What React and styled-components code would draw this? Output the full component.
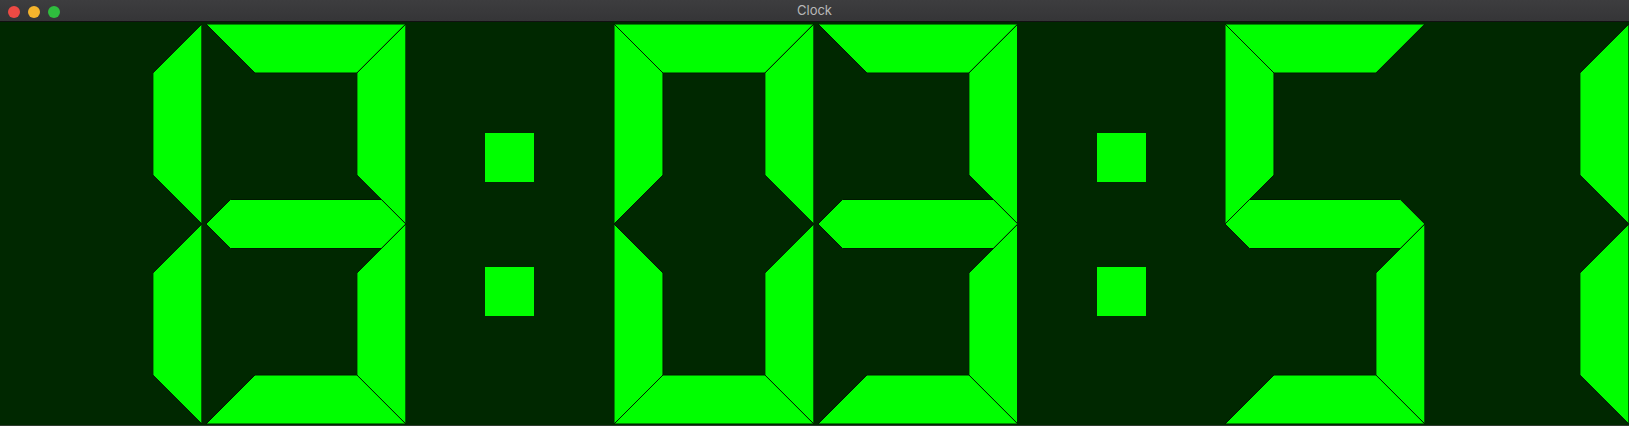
import React from "react";
import styled, { createGlobalStyle } from "styled-components";

const GlobalStyle = createGlobalStyle`
  html, body {
    margin: 0;
    padding: 0;
    background: #002800;
    overflow: hidden;
  }
`;

const Window = styled.div`
  display: flex;
  flex-direction: column;
  width: 1629px;
  height: 426px;
  overflow: hidden;
  background: #002800;
  border-bottom: 1px solid #2f3d2f;
  box-sizing: border-box;
`;

const TitleBar = styled.div`
  position: relative;
  display: flex;
  align-items: center;
  justify-content: center;
  height: 21px;
  flex-shrink: 0;
  background: linear-gradient(#3d3d3f, #353537);
  border-bottom: 1px solid #111;
`;

const Lights = styled.div`
  position: absolute;
  left: 8px;
  top: 6px;
  display: flex;
  gap: 8px;
`;

const Light = styled.span`
  width: 12px;
  height: 12px;
  border-radius: 50%;
  background: ${(props) => props.color};
`;

const Title = styled.span`
  color: #b8b8b8;
  font-family: Inter, "Liberation Sans", sans-serif;
  font-size: 13px;
  line-height: 1;
`;

const Face = styled.div`
  display: grid;
  grid-template-columns: repeat(8, 1fr);
  width: 1631px;
  flex-shrink: 0;
  padding: 2px 0 1px;
  height: 400px;
`;

const Cell = styled.div`
  padding: 0 2px;
  height: 400px;
`;

const ColonCell = styled.div`
  display: flex;
  flex-direction: column;
  align-items: center;
  gap: 85px;
  padding-top: 109px;
`;

const Dot = styled.div`
  width: 49px;
  height: 49px;
  background: #00ff00;
`;

// segment polygons in a 200x400 box, segment thickness 49
const SEGMENTS = {
  a: "0,0 200,0 151,49 49,49",
  b: "200,0 200,200 151,151 151,49",
  c: "200,200 200,400 151,351 151,249",
  d: "0,400 49,351 151,351 200,400",
  e: "0,200 49,249 49,351 0,400",
  f: "0,0 49,49 49,151 0,200",
  g: "0,200 24.5,175.5 175.5,175.5 200,200 175.5,224.5 24.5,224.5",
};

const DIGITS = {
  0: "abcdef",
  1: "bc",
  2: "abged",
  3: "abgcd",
  4: "fgbc",
  5: "afgcd",
  6: "afgedc",
  7: "abc",
  8: "abcdefg",
  9: "abcdfg",
};

const Digit = ({ value }) => {
  const lit = DIGITS[value];
  return (
    <Cell>
      <svg
        width="100%"
        height="400"
        viewBox="0 0 200 400"
        preserveAspectRatio="none"
      >
        {lit.split("").map((s) => (
          <polygon
            key={s}
            points={SEGMENTS[s]}
            fill="#00ff00"
            stroke="#001800"
            strokeWidth="1"
            vectorEffect="non-scaling-stroke"
          />
        ))}
      </svg>
    </Cell>
  );
};

const Colon = () => (
  <ColonCell>
    <Dot />
    <Dot />
  </ColonCell>
);

const App = () => {
  const time = "13:03:51";
  return (
    <>
      <GlobalStyle />
      <Window>
        <TitleBar>
          <Lights>
            <Light color="#ee4a44" />
            <Light color="#f5b42c" />
            <Light color="#2fbe3e" />
          </Lights>
          <Title>Clock</Title>
        </TitleBar>
        <Face>
          {time.split("").map((ch, i) =>
            ch === ":" ? <Colon key={i} /> : <Digit key={i} value={ch} />
          )}
        </Face>
      </Window>
    </>
  );
};

export default App;
